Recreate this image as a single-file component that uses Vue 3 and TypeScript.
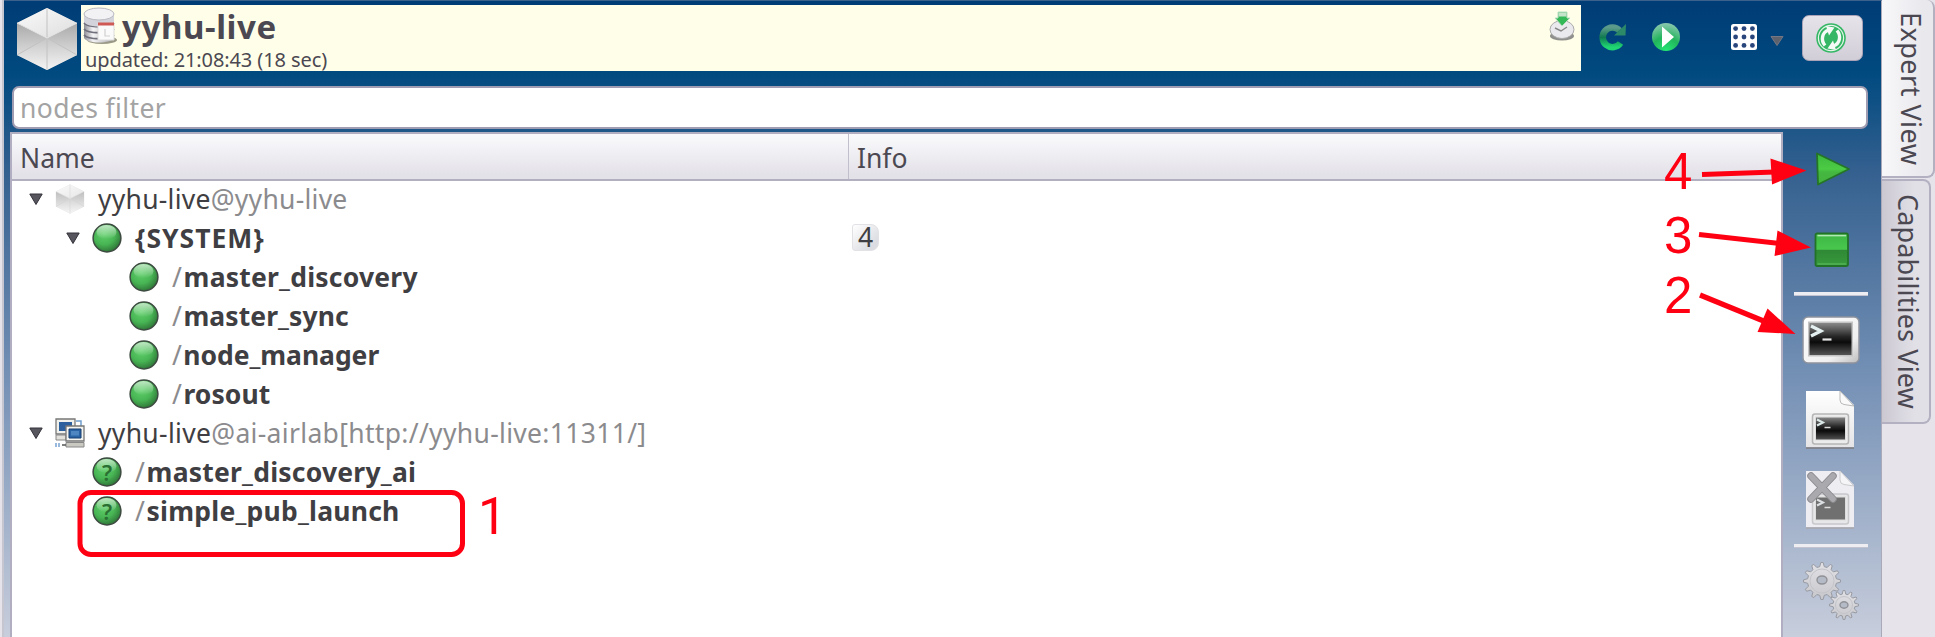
<script setup lang="ts">
interface TreeRow {
  depth: number
  icon: 'cube' | 'ball' | 'question' | 'hosts'
  expandable?: boolean
  strong?: string
  name?: string
  dim?: string
  slash?: boolean
  info?: string
  fit: string
}

const rows: TreeRow[] = [
  { depth: 0, icon: 'cube', expandable: true, name: 'yyhu-live', dim: '@yyhu-live', fit: 'fit-a' },
  { depth: 1, icon: 'ball', expandable: true, strong: '{SYSTEM}', info: '4', fit: 'fit-b' },
  { depth: 2, icon: 'ball', slash: true, strong: 'master_discovery', fit: 'fit-c' },
  { depth: 2, icon: 'ball', slash: true, strong: 'master_sync', fit: 'fit-d' },
  { depth: 2, icon: 'ball', slash: true, strong: 'node_manager', fit: 'fit-e' },
  { depth: 2, icon: 'ball', slash: true, strong: 'rosout', fit: 'fit-d' },
  { depth: 0, icon: 'hosts', expandable: true, name: 'yyhu-live', dim: '@ai-airlab[http://yyhu-live:11311/]', fit: 'fit-g' },
  { depth: 1, icon: 'question', slash: true, strong: 'master_discovery_ai', fit: 'fit-c' },
  { depth: 1, icon: 'question', slash: true, strong: 'simple_pub_launch', fit: 'fit-c' },
]

const gear = (cx: number, cy: number, outer: number, inner: number, teeth: number): string => {
  const points: string[] = []
  for (let i = 0; i < teeth; i++) {
    const base = (i / teeth) * Math.PI * 2
    const step = (Math.PI * 2) / teeth
    for (const [offset, radius] of [[-0.3, inner], [-0.12, outer], [0.12, outer], [0.3, inner]]) {
      const a = base + offset * step
      points.push(`${(cx + Math.sin(a) * radius).toFixed(2)},${(cy - Math.cos(a) * radius).toFixed(2)}`)
    }
  }
  return points.join(' ')
}
const bigGear = gear(19, 19, 18.5, 14.5, 12)
const smallGear = gear(41, 43, 14.5, 11, 12)
</script>

<template>
  <div class="window">
    <svg class="defs" width="0" height="0" aria-hidden="true">
      <defs>
        <linearGradient id="cubeTop" x1="0" y1="0" x2="1" y2="1"><stop offset="0" stop-color="#fafafa" /><stop offset="1" stop-color="#dedede" /></linearGradient>
        <linearGradient id="cubeSide" x1="0" y1="0" x2="0" y2="1"><stop offset="0" stop-color="#a9a9a9" /><stop offset="1" stop-color="#dcdcdc" /></linearGradient>
        <linearGradient id="cubeFoot" x1="0" y1="0" x2="0" y2="1"><stop offset="0" stop-color="#c6c6c6" /><stop offset="1" stop-color="#f4f4f4" /></linearGradient>
        <radialGradient id="ballFill" cx=".4" cy=".35" r=".7"><stop offset="0" stop-color="#5fd06a" /><stop offset=".55" stop-color="#48b554" /><stop offset="1" stop-color="#2c7035" /></radialGradient>
        <linearGradient id="ballShine" x1="0" y1="0" x2="0" y2="1"><stop offset="0" stop-color="#fff" stop-opacity=".65" /><stop offset="1" stop-color="#fff" stop-opacity="0" /></linearGradient>
        <linearGradient id="screen" x1="0" y1="0" x2="0" y2="1"><stop offset="0" stop-color="#8a8a8a" /><stop offset=".42" stop-color="#262626" /><stop offset=".6" stop-color="#0b0b0b" /><stop offset="1" stop-color="#555" /></linearGradient>
        <linearGradient id="steel" x1="0" y1="0" x2="1" y2="1"><stop offset="0" stop-color="#fff" /><stop offset=".7" stop-color="#f0f0f0" /><stop offset="1" stop-color="#bdbdbd" /></linearGradient>
        <linearGradient id="paper" x1="0" y1="0" x2="0" y2="1"><stop offset="0" stop-color="#fff" /><stop offset="1" stop-color="#e4e4e6" /></linearGradient>
        <linearGradient id="drum" x1="0" y1="0" x2="1" y2="0"><stop offset="0" stop-color="#8e8e96" /><stop offset=".3" stop-color="#f4f4f6" /><stop offset="1" stop-color="#a5a5ac" /></linearGradient>
        <linearGradient id="reload" x1="0" y1="0" x2="0" y2="1"><stop offset="0" stop-color="#5b9a8a" /><stop offset=".5" stop-color="#107a50" /><stop offset="1" stop-color="#1fd673" /></linearGradient>
        <radialGradient id="playDisc" cx=".5" cy="1" r="1"><stop offset="0" stop-color="#25e874" /><stop offset=".5" stop-color="#22b45c" /><stop offset="1" stop-color="#8cc9b0" /></radialGradient>
        <linearGradient id="stopFill" x1="0" y1="0" x2="0" y2="1"><stop offset="0" stop-color="#59cf5b" /><stop offset=".1" stop-color="#3fba46" /><stop offset=".49" stop-color="#48c74d" /><stop offset=".5" stop-color="#2f8835" /><stop offset="1" stop-color="#379a3c" /></linearGradient>
        <linearGradient id="runFill" x1="0" y1="0" x2="0" y2="1"><stop offset="0" stop-color="#3cb83c" /><stop offset=".5" stop-color="#4ccb45" /><stop offset=".6" stop-color="#44b840" /><stop offset="1" stop-color="#45b23e" /></linearGradient>
        <linearGradient id="gearFill" x1="0" y1="0" x2="0" y2="1"><stop offset="0" stop-color="#e2e2e6" /><stop offset="1" stop-color="#c8c8cc" /></linearGradient>
        <symbol id="cube" viewBox="0 0 62 64">
          <path d="M31 1 61 16V48L31 63 1 48V16Z" fill="#cfcfcf" />
          <path d="M31 1 61 16 31 31 1 16Z" fill="url(#cubeTop)" />
          <path d="M1 16 31 31 1 48Z" fill="url(#cubeSide)" />
          <path d="M61 16 31 31 61 48Z" fill="url(#cubeSide)" />
          <path d="M31 31 61 48 31 63 1 48Z" fill="url(#cubeFoot)" />
          <path d="M31 1V63M31 31 1 48M31 31 61 48" fill="none" stroke="#c2c2c2" stroke-width="1" />
          <path d="M1 16 31 31 61 16" fill="none" stroke="#e6e6e6" stroke-width="1" />
        </symbol>
        <symbol id="ball" viewBox="0 0 30 30">
          <circle cx="15" cy="15" r="13.9" fill="url(#ballFill)" stroke="#3d4a40" stroke-width="1.5" />
          <ellipse cx="14.5" cy="9" rx="10" ry="7" fill="url(#ballShine)" />
        </symbol>
      </defs>
    </svg>

    <div class="edge"></div>
    <main class="panel">
      <header class="head">
        <svg class="head-cube"><use href="#cube" /></svg>
        <div class="banner">
          <div class="banner-text">
            <div class="title-line">
              <svg class="db" viewBox="0 0 36 38">
                <ellipse cx="19" cy="33" rx="15" ry="4" fill="#6f6e5c" opacity=".7" />
                <path d="M1 6v25c3 6 27 6 30 0V6Z" fill="url(#drum)" />
                <path d="M1 16c4 5 26 5 30 0M1 22c4 5 26 5 30 0M1 28c4 5 26 5 30 0" fill="none" stroke="#70707c" stroke-width="1.8" />
                <path d="M1 6v9c4 6 26 6 30 0V6Z" fill="#d3d3db" />
                <ellipse cx="16" cy="7" rx="15" ry="6" fill="#f2f2f5" stroke="#b9b9c1" />
                <path d="M15 16h16v17H15Z" fill="#fafafa" stroke="#ddd" />
                <path d="M15 15.500h16v3H15Z" fill="#cf5a55" />
                <path d="M22 22v7h5" fill="none" stroke="#d0d0d0" stroke-width="1.2" />
              </svg>
              <strong class="title">yyhu-live</strong>
            </div>
            <div class="updated">updated: 21:08:43 (18 sec)</div>
          </div>
          <svg class="timer" viewBox="0 0 26 32">
            <ellipse cx="13" cy="25" rx="12" ry="4.500" fill="#8f8f8d" />
            <ellipse cx="13" cy="18.500" rx="12" ry="9" fill="#e9e9ee" stroke="#aaa" />
            <path d="m6 17 6 3 6-4" fill="none" stroke="#888" stroke-width="1.400" />
            <path d="M9 1h9v6h3l-8 8-7-8h3Z" fill="#35b958" stroke="#b9dcc0" />
            <path d="M9.500 1.500h8v4h-8Z" fill="#c5e3cb" />
          </svg>
        </div>
        <svg class="reload" viewBox="0 0 30 30">
          <path d="M21.500 8.500A9.800 9.800 0 1 0 22.500 21" fill="none" stroke="url(#reload)" stroke-width="6.500" />
          <path d="m28 2-.5 11.500H16Z" fill="#2c8a68" />
        </svg>
        <svg class="play" viewBox="0 0 30 30">
          <circle cx="15" cy="15" r="14" fill="url(#playDisc)" />
          <path d="M11 4.500 23 15 11 25.500Z" fill="#fff" />
        </svg>
        <svg class="grid" viewBox="0 0 26 26">
          <rect width="26" height="26" rx="2.500" fill="#fff" />
          <g fill="#28457c"><template v-for="r in 3" :key="r"><circle v-for="c in 3" :key="c" :cx="c * 8.400 - 3.800" :cy="r * 8.400 - 3.800" r="2.400" /></template></g>
        </svg>
        <svg class="drop" viewBox="0 0 14 10"><path d="M1 .5h12L7 9.500Z" fill="#5e626d" stroke="#747783" /></svg>
        <button class="sync" type="button" aria-label="Synchronize">
          <svg viewBox="0 0 30 30">
            <circle cx="15" cy="15" r="14.800" fill="#35b765" />
            <circle cx="15" cy="15" r="12.600" fill="none" stroke="#e6f4ea" stroke-width="1.200" />
            <path d="M9 22.500C4.500 17 6 9.500 12.500 7" fill="none" stroke="#f5faf6" stroke-width="3.400" />
            <path d="M21 7.500C25.500 13 24 20.500 17.500 23" fill="none" stroke="#f5faf6" stroke-width="3.400" />
            <path d="m10 3 8.500 1.500-5.500 8ZM20 27l-8.500-1.500 5.500-8Z" fill="#f5faf6" />
          </svg>
        </button>
      </header>

      <div class="filter"><span class="t-filter">nodes filter</span></div>

      <section class="body">
        <div class="tree">
          <div class="columns">
            <div class="col-name"><span>Name</span></div>
            <div class="col-info"><span>Info</span></div>
          </div>
          <div class="rows">
            <div v-for="(row, i) in rows" :key="i" class="row">
              <div class="cell" :class="'depth-' + row.depth">
                <span class="twist"><svg v-if="row.expandable" viewBox="0 0 14 12"><path d="M.8 1h12.400L7 11.500Z" fill="#57565f" stroke="#34333b" /></svg></span>
                <span class="icon">
                  <svg v-if="row.icon === 'cube'" class="ico faded"><use href="#cube" /></svg>
                  <svg v-else-if="row.icon === 'hosts'" class="ico" viewBox="0 0 30 30">
                    <path d="M21 3h5v7" fill="none" stroke="#6f9fce" stroke-width="1.500" />
                    <path d="M1 1h19v15H1Z" fill="#f0f0ec" stroke="#777" stroke-width="1.300" />
                    <path d="M4 4h13v9H4Z" fill="#2c5f9e" />
                    <path d="M1 17h10v5H1Z" fill="#e2e1dc" stroke="#888" />
                    <path d="M11 8h18v15H11Z" fill="#f3f3ef" stroke="#777" stroke-width="1.300" />
                    <path d="M14 11h12v9H14Z" fill="#2b64a6" stroke="#173e70" />
                    <path d="M16 13h8v4.500h-8Z" fill="#4d86c0" />
                    <path d="M11 24.500h18v4.500H11Z" fill="#c9c8c1" stroke="#888" />
                    <path d="M1 25v4M4 25v4" stroke="#77a2cf" stroke-width="1.500" /><path d="M7 27h4" stroke="#555" stroke-width="1.500" />
                  </svg>
                  <span v-else class="ico node">
                    <svg class="ico"><use href="#ball" /></svg>
                    <span v-if="row.icon === 'question'" class="mark">?</span>
                  </span>
                </span>
                <span class="label" :class="row.fit"><span v-if="row.name">{{ row.name }}</span><span v-if="row.dim" class="dim">{{ row.dim }}</span><span v-if="row.slash" class="dim slash">/</span><strong v-if="row.strong">{{ row.strong }}</strong></span>
              </div>
              <div class="info"><span v-if="row.info" class="badge">{{ row.info }}</span></div>
            </div>
          </div>
        </div>

        <aside class="tools">
          <svg class="t-run" viewBox="0 0 36 36"><path d="M2 2.500 34 18 3 33.500Z" fill="url(#runFill)" stroke="#257527" stroke-width="1.800" stroke-linejoin="round" /></svg>
          <svg class="t-stop" viewBox="0 0 36 36"><rect x="1.500" y="1.500" width="32.500" height="32.500" rx="1.500" fill="url(#stopFill)" stroke="#227328" stroke-width="1.800" /><path d="M3.500 3.600h28.500" stroke="#b3e8b5" stroke-width="1.500" /><path d="M3.500 32h28.500" stroke="#5fc064" /></svg>
          <div class="rule"></div>
          <svg class="t-term" viewBox="0 0 58 48">
            <rect x="1" y="1" width="56" height="46" rx="5" fill="url(#steel)" stroke="#8e939d" stroke-width="1.500" />
            <rect x="6" y="5.500" width="45" height="35" fill="#c4c4c4" />
            <rect x="7.500" y="7" width="42" height="32" fill="url(#screen)" />
            <path d="m9 10 10 5-10 5" fill="none" stroke="#e4efef" stroke-width="3.200" /><path d="M20.500 23.500h9" stroke="#e6e6e6" stroke-width="2.200" />
          </svg>
          <svg class="t-doc" viewBox="0 0 50 60">
            <path d="M1 1h34l14 14v43.500H1Z" fill="url(#paper)" /><path d="M1 58h48" stroke="#6e6f77" stroke-width="1.600" />
            <path d="M35 1v9q0 4 4 4.500l10 1.500Z" fill="#fafafa" stroke="#b9b9b9" />
            <rect x="7.500" y="24" width="36" height="30" rx="2.500" fill="#ececec" stroke="#b5b5b5" stroke-width="1.500" />
            <rect x="10.500" y="27" width="30" height="23" fill="url(#screen)" stroke="#ddd" />
            <path d="m12 29.500 6 3-6 3" fill="none" stroke="#dce9e9" stroke-width="2" /><path d="M19.500 37.500h6" stroke="#ddd" stroke-width="1.500" />
          </svg>
          <svg class="t-kill" viewBox="0 0 50 60">
            <path d="M1 1h34l14 14v43.500H1Z" fill="#eeedf1" /><path d="M1 58h48" stroke="#9b9ca4" stroke-width="1.600" />
            <path d="M35 1v9q0 4 4 4.500l10 1.500Z" fill="#f5f4f7" stroke="#cbcbce" />
            <rect x="7.500" y="24" width="36" height="30" rx="2.500" fill="#e7e6e9" stroke="#c8c8cb" stroke-width="1.500" />
            <rect x="10.500" y="27" width="30" height="23" fill="#707071" stroke="#ddd" />
            <path d="m12 29.500 6 3-6 3" fill="none" stroke="#dde0e2" stroke-width="2" /><path d="M19.500 37.500h6" stroke="#ddd" stroke-width="1.500" />
            <path d="m6 6 22 23M28 6 6 29" stroke="#8c8c90" stroke-width="7.500" stroke-linecap="round" /><path d="m6 6 22 23M28 6 6 29" stroke="#aaaaae" stroke-width="5.500" stroke-linecap="round" />
          </svg>
          <div class="rule rule-low"></div>
          <svg class="t-gears" viewBox="0 0 56 58">
            <g fill="url(#gearFill)" stroke="#989aa2" stroke-width="1"><polygon :points="bigGear" /><polygon :points="smallGear" /></g>
            <g fill="#b4bac6" stroke="#909197" stroke-width="1.400"><ellipse cx="19" cy="18" rx="5" ry="4" /><ellipse cx="41" cy="43" rx="4" ry="3.200" /></g>
            <circle cx="19" cy="19" r="12" fill="none" stroke="#c3c4c9" />
            <circle cx="41" cy="43" r="8.500" fill="none" stroke="#c3c4c9" />
          </svg>
        </aside>
      </section>
    </main>

    <nav class="tabs">
      <div class="tab active"><span class="t-expert">Expert View</span></div>
      <div class="tab"><span class="t-cap">Capabilities View</span></div>
    </nav>

    <svg class="callouts" viewBox="0 0 1935 637">
      <rect x="80" y="492.500" width="382.500" height="62" rx="11" fill="none" stroke="#ff0013" stroke-width="5" />
      <g stroke="#ff0013" stroke-width="5.200"><path d="M1702 174.500 1775 172" /><path d="M1699 234.500 1780 243.500" /><path d="M1700 295 1766 322" /></g>
      <g fill="#ff0013"><path d="M1770.500 158.500 1806.500 170.500 1772 184.500Z" /><path d="M1777.500 230.500 1811 247.500 1774.500 256Z" /><path d="M1767.500 308.500 1795.500 334 1757.500 332Z" /></g>
      <g class="digits"><text class="one" x="478" y="533.500">1</text><text x="1664" y="313">2</text><text x="1664" y="253">3</text><text x="1664" y="189">4</text></g>
    </svg>
  </div>
</template>

<style>
html,
body {
  margin: 0;
  overflow: hidden;
}
</style>

<style scoped>
.window {
  position: relative;
  display: flex;
  width: 1935px;
  height: 637px;
  overflow: hidden;
  background: #e6e4ea;
  color: #4b4852;
  font-family: 'Noto Sans', 'Open Sans', sans-serif;
  font-size: 26.500px;
  white-space: nowrap;
}
.window * { box-sizing: border-box; }
.window svg { display: block; flex: none; }
.window .defs { position: absolute; }
.edge { width: 4px; flex: none; border-right: 2px solid #c6c6d0; }
.panel {
  display: flex;
  flex-direction: column;
  flex: none;
  width: 1878px;
  background: linear-gradient(#003c75 0, #004a80 72px, #34608f 170px, #7490b5 375px, #c8cedc 637px);
  border-right: 1px solid #a9a9ba;
  border-top: 1px solid #3b628b;
}
.head { display: flex; flex: none; align-items: flex-start; height: 84px; padding: 4px 0 0 12px; }
.head-cube { width: 62px; height: 64px; margin: 2px 3px 0 0; }
.banner { display: flex; justify-content: space-between; width: 1499.500px; height: 66px; background: #ffffe9; }
.banner-text { padding: 2px 0 0 2px; }
.title-line { display: flex; height: 38px; align-items: flex-start; }
.db { width: 36px; height: 38px; }
.title { margin-left: 3px; font-size: 33px; line-height: 39px; letter-spacing: .6px; }
.updated { margin-left: 2px; font-size: 20px; line-height: 29px; letter-spacing: -.1px; }
.timer { width: 26px; height: 32px; margin: 6px 6px 0 0; }
.reload { width: 30px; height: 30px; margin: 17px 0 0 17px; }
.play { width: 30px; height: 30px; margin: 17px 0 0 23px; }
.grid { width: 26px; height: 26px; margin: 19px 0 0 50px; }
.drop { width: 14px; height: 10px; margin: 31px 0 0 13px; }
.sync {
  display: flex;
  align-items: center;
  justify-content: center;
  width: 61px;
  height: 46px;
  margin: 10px 0 0 18px;
  padding: 0 2px 1px 0;
  border: 1px solid #aaa3b7;
  border-radius: 7px;
  background: linear-gradient(#e6e3ea, #d1ced8);
}
.sync svg { width: 30px; height: 30px; }
.filter {
  display: flex;
  flex: none;
  align-items: center;
  width: 1856px;
  height: 43px;
  margin: 1px 0 0 8px;
  padding-left: 6px;
  border: 2px solid #a09cb1;
  border-radius: 7px;
  background: #fff;
  color: #a3a3a3;
  letter-spacing: .38px;
}
.body { display: flex; flex: 1; margin: 3px 0 0 6px; }
.tree { width: 1773px; border: 2px solid #b0aec0; border-bottom: 0; background: #fff; }
.columns { display: flex; height: 47px; border-bottom: 2px solid #b2b0c0; background: linear-gradient(#fafafc, #e4e2e9 90%); line-height: 48px; }
.col-name { width: 837px; padding-left: 8px; border-right: 1px solid #c1bfcc; }
.col-info { padding-left: 8px; }
.rows { margin-top: -2px; color: #3f3e42; }
.row { display: flex; height: 39.100px; align-items: center; }
.cell { display: flex; align-items: center; width: 837px; }
.depth-0 { padding-left: 17px; }
.depth-1 { padding-left: 54px; }
.depth-2 { padding-left: 91px; }
.twist { width: 14px; }
.twist svg { width: 14px; height: 12px; }
.icon { width: 30px; margin-left: 12px; }
.ico { width: 30px; height: 30px; }
.faded { opacity: .75; }
.node { position: relative; display: block; }
.mark { position: absolute; inset: 0; color: #2a7033; font-size: 22px; font-weight: 600; line-height: 30px; text-align: center; }
.label { margin-left: 13px; line-height: 36px; }
.slash { margin-right: 1.500px; }
.fit-a { letter-spacing: .26px; }
.fit-b { letter-spacing: .98px; }
.fit-c { letter-spacing: .22px; }
.fit-d { letter-spacing: .08px; }
.fit-e { letter-spacing: -.05px; }
.fit-g { letter-spacing: .32px; }
.dim { color: #8b8b8e; }
.badge {
  display: block;
  width: 27px;
  height: 27px;
  margin-left: 3px;
  padding-left: 5px;
  border: 1px solid #e2e2e6;
  border-radius: 3px 8px 8px 3px;
  background: linear-gradient(135deg, #fff, #dcdde2 80%);
  line-height: 25px;
}
.tools { display: flex; flex-direction: column; align-items: flex-start; width: 98px; padding-left: 19px; }
.t-run { width: 36px; height: 36px; margin: 19px 0 0 13px; }
.t-stop { width: 36px; height: 36px; margin: 45px 0 0 12px; }
.rule { width: 74px; height: 4px; margin: 24px 0 0 -8px; background: #eeedf2; border-bottom: 1px solid #c1c4d0; }
.t-term { width: 58px; height: 48px; margin: 20px 0 0 0; }
.t-doc { width: 50px; height: 60px; margin: 26px 0 0 3px; }
.t-kill { width: 50px; height: 60px; margin: 20px 0 0 3px; }
.rule-low { margin-top: 14px; }
.t-gears { width: 56px; height: 58px; margin: 14px 0 0 1px; }
.tabs { flex: 1; }
.tab {
  display: flex;
  width: 49px;
  height: 245px;
  margin-top: 1px;
  padding: 13px 0 0 8px;
  border: 2px solid #b3b1c1;
  border-left: 0;
  border-radius: 0 8px 8px 0;
  background: linear-gradient(90deg, #cbc8d2, #e2e0e7 70%);
  font-size: 27px;
  line-height: 36px;
}
.tab.active { width: 53px; height: 178px; margin: 0; padding-top: 12px; padding-left: 11px; border-top: 0; background: linear-gradient(90deg, #f8f8fa, #e9e8ed 80%); }
.tab span { writing-mode: vertical-rl; }
.t-expert { letter-spacing: .48px; }
.t-cap { letter-spacing: .15px; }
.callouts { position: absolute; inset: 0; width: 1935px; height: 637px; pointer-events: none; }
.digits { font: 51px 'Liberation Sans', Arial, sans-serif; fill: #ff0013; }
.one { font-family: Roboto, sans-serif; }
</style>
